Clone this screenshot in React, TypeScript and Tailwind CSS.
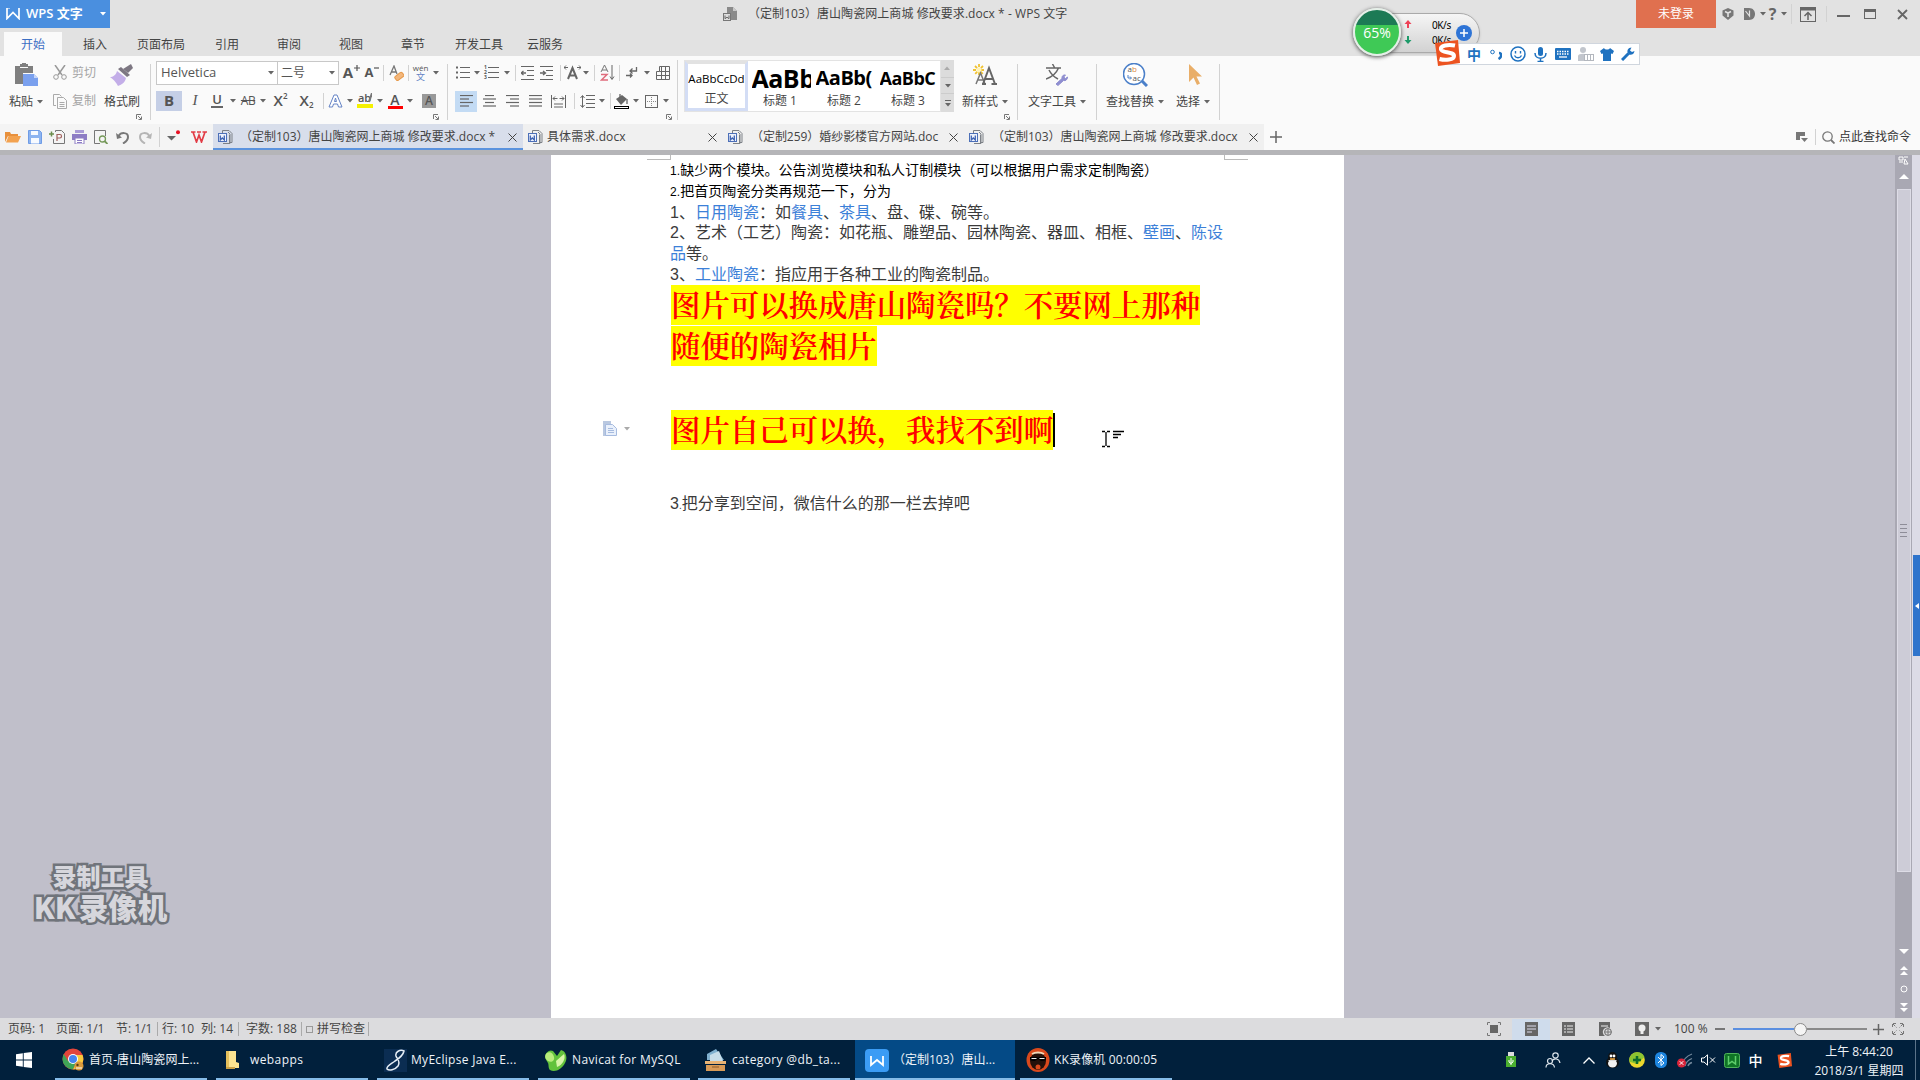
import React from "react";

type Kids = { className?: string; children?: React.ReactNode };

const UI = "font-['Open_Sans','Noto_Sans_CJK_SC',sans-serif]";

/** Fixed-width centred cell used by every toolbar row. */
function C({ className = "", children }: Kids) {
  return <div className={`flex shrink-0 items-center justify-center ${className}`}>{children}</div>;
}

function Svg({ w, h, children, className = "" }: { w: number; h: number; className?: string; children: React.ReactNode }) {
  return (
    <svg width={w} height={h} viewBox={`0 0 ${w} ${h}`} fill="none" className={`block shrink-0 ${className}`}>
      {children}
    </svg>
  );
}

function Caret({ color = "#666" }: { color?: string }) {
  return (
    <Svg w={6} h={4}>
      <path d="M0 0h6L3 3.5z" fill={color} />
    </Svg>
  );
}

function Sep({ className = "h-[16px]" }: { className?: string }) {
  return <div className={`w-px shrink-0 bg-[#d2d2d2] ${className}`} />;
}

function Lines({ rows, w = 13 }: { rows: [number, number][]; w?: number }) {
  return (
    <Svg w={w} h={12}>
      {rows.map(([a, b], i) => (
        <path key={i} d={`M${a} ${0.5 + i * 3.5}H${b}`} stroke="#666" strokeWidth="1.2" />
      ))}
    </Svg>
  );
}

function Launcher() {
  return (
    <Svg w={6} h={6}>
      <path d="M.5 5V.5H5M2 2l3 3M5.5 2.5v3h-3" stroke="#777" />
    </Svg>
  );
}

function DocIcon() {
  return (
    <Svg w={15} h={15}>
      <path d="M4.500 3V.5H11L14 3.500V12.500H12M6 13.500h6V4L10 2" stroke="#7d8187" />
      <path d="M11.500 5v8.500H5" stroke="#7d8187" />
      <rect x="0.500" y="3.500" width="8" height="8" fill="#eef2fb" stroke="#4d70b8" />
      <path d="M2.300 5.500v4.500l2-2 2 2V5.500" stroke="#3f64b3" strokeWidth="1.300" />
    </Svg>
  );
}

function Close() {
  return (
    <Svg w={9} h={9}>
      <path d="M.5.5l8 8M8.500.5l-8 8" stroke="#444" />
    </Svg>
  );
}

function TitleBar() {
  return (
    <div className="flex h-[28px] items-center bg-[#e2e2e2]">
      <div className="flex h-[28px] w-[110px] items-center bg-[#4a8fdf] pl-[6px]">
        <Svg w={14} h={12}>
          <path d="M1 0v10.500L7 4.500l6 6V0" stroke="#fff" strokeWidth="1.700" />
          <path d="M1 0h3" stroke="#fff" />
        </Svg>
        <span className="ml-[6px] w-[62px] whitespace-nowrap text-[13px] font-semibold text-white">WPS 文字</span>
        <C className="ml-[9px] w-[12px]"><Caret color="#fff" /></C>
      </div>
      <Svg w={15} h={15} className="ml-[613px]">
        <path d="M4 0h6l4 4v9H4z" fill="#8a8a8a" />
        <path d="M10 0v4h4z" fill="#c9c9c9" />
        <rect x="0.500" y="6.500" width="7" height="7" fill="#ddd" stroke="#777" />
        <path d="M2 8.500v3.200l2-1.500 2 1.500V8.500" stroke="#666" />
      </Svg>
      <span className="ml-[10px] w-[398px] whitespace-nowrap text-[12px] tracking-[0.06px] text-[#444]">（定制103）唐山陶瓷网上商城 修改要求.docx * - WPS 文字</span>
      <div className="ml-[490px] flex h-[28px] w-[80px] items-center justify-center bg-[#e0704f] text-[12px] text-white">未登录</div>
      <C className="w-[24px]">
        <Svg w={12} h={12}>
          <path d="M6 0l5.500 2.500v5L6 12 .5 7.500v-5z" fill="#777" />
          <path d="M3 3.500l3 1.500 3-1.500M6 5v4" stroke="#e2e2e2" strokeWidth="1.600" />
        </Svg>
      </C>
      <C className="w-[19px]">
        <Svg w={11} h={12}>
          <path d="M0 0h5c8 0 8 12 0 12H0z" fill="#777" />
          <path d="M1.500 3l4 5V2.500" stroke="#e2e2e2" strokeWidth="1.200" />
        </Svg>
      </C>
      <C className="w-[7px]"><Caret /></C>
      <C className="w-[13px] text-[16px] font-bold text-[#666]">?</C>
      <C className="w-[9px]"><Caret /></C>
      <C className="w-[6px]"><Sep className="h-[20px] bg-[#bbb]" /></C>
      <C className="w-[27px]">
        <Svg w={16} h={15}>
          <rect x="0.500" y="0.500" width="15" height="14" stroke="#666" />
          <path d="M0 2h16" stroke="#666" strokeWidth="3" />
          <path d="M8 13V6M4.500 9L8 5.500 11.500 9" stroke="#666" strokeWidth="1.500" />
        </Svg>
      </C>
      <C className="w-[10px]"><Sep className="h-[16px] bg-[#bbb]" /></C>
      <C className="w-[24px]"><div className="mt-[4px] h-[2px] w-[13px] bg-[#666]" /></C>
      <C className="ml-[3px] w-[24px]"><div className="h-[10px] w-[12px] border-[1.500px] border-t-[3px] border-[#666]" /></C>
      <C className="ml-[8px] w-[24px]">
        <Svg w={11} h={11}><path d="M1 1l9 9M10 1l-9 9" stroke="#666" strokeWidth="1.800" /></Svg>
      </C>
    </div>
  );
}

const tabs: [string, string][] = [
  ["插入", "w-[62px]"],
  ["页面布局", "w-[70px]"],
  ["引用", "w-[62px]"],
  ["审阅", "w-[62px]"],
  ["视图", "w-[62px]"],
  ["章节", "w-[62px]"],
  ["开发工具", "w-[70px]"],
  ["云服务", "w-[62px]"],
];

function RibbonTabs() {
  return (
    <div className="flex h-[28px] items-end bg-[#e2e2e2] pl-[4px] text-[12px] text-[#444]">
      <div className="flex h-[24px] w-[58px] items-center justify-center bg-[#fafafa] pt-[2px] text-[#3c6fc4]">开始</div>
      <div className="ml-[2px] flex h-[24px] items-center pt-[2px]">
        {tabs.map(([t, w]) => (
          <C key={t} className={w}>{t}</C>
        ))}
      </div>
    </div>
  );
}

function BigButton({ icon, label, className, caret = true }: { icon: React.ReactNode; label: string; className: string; caret?: boolean }) {
  return (
    <div className={`flex h-[56px] shrink-0 flex-col items-center ${className}`}>
      <div className="flex h-[30px] items-center justify-center">{icon}</div>
      <div className="flex h-[24px] items-center gap-[4px] whitespace-nowrap text-[12px] text-[#444]">
        {label}
        {caret && <Caret />}
      </div>
    </div>
  );
}

function Clipboard() {
  return (
    <div className="flex h-[68px] w-[150px] shrink-0 pt-[4px]">
      <BigButton
        className="w-[50px] pl-[2px]"
        label="粘贴"
        icon={
          <Svg w={26} h={24} className="ml-[1px]">
            <path d="M1 3h5V1h2V0h4v1h2v2h5v7H9v11H1z" fill="#7f7f7f" />
            <path d="M6 4.500h8" stroke="#fafafa" />
            <path d="M9 11h11l4 4v8H9z" fill="#7aa0ee" />
            <path d="M20 11v4h4z" fill="#c5d6fa" />
          </Svg>
        }
      />
      <div className="flex w-[52px] flex-col text-[12px] text-[#a5a5a5]">
        <div className="flex h-[25px] items-center gap-[5px] pl-[3px]">
          <Svg w={14} h={15}>
            <path d="M2 0l7 10M12 0L5 10" stroke="#999" strokeWidth="1.500" />
            <circle cx="3" cy="12" r="2.300" stroke="#999" />
            <circle cx="11" cy="12" r="2.300" stroke="#999" />
          </Svg>
          剪切
        </div>
        <div className="mt-[3px] flex h-[26px] items-center gap-[5px] pl-[3px]">
          <Svg w={14} h={15}>
            <path d="M3 11.500H.5V.5h6l2 2" stroke="#aaa" />
            <path d="M4.500 3.500h6l3 3v8h-9zM6.500 8.500h5M6.500 10.500h5M6.500 12.500h5" stroke="#aaa" />
          </Svg>
          复制
        </div>
      </div>
      <div className="flex w-[40px] flex-col items-center">
        <BigButton
          className="w-[40px]"
          caret={false}
          label="格式刷"
          icon={
            <Svg w={24} h={24}>
              <path d="M21 1l2 4-5 5-5-4z" fill="#7d7782" />
              <path d="M11 4l9 8-3 2-9-8z" fill="#7d7782" />
              <path d="M7 8l9 7c-1 5-5 7-8 8-2-4-5-7-8-9 3 0 6-2 7-6z" fill="#c3aee8" />
            </Svg>
          }
        />
        <div className="-mt-[2px] self-end"><Launcher /></div>
      </div>
    </div>
  );
}

function FontGroup() {
  return (
    <div className="flex h-[68px] w-[296px] shrink-0 flex-col pl-[5px] pt-[4px] text-[#555]">
      <div className="flex h-[25px] items-center">
        <div className="flex h-[24px] w-[122px] items-center justify-between border border-[#c8c8c8] bg-white pl-[4px] pr-[3px] text-[13px]">
          Helvetica <Caret />
        </div>
        <div className="-ml-px flex h-[24px] w-[62px] items-center justify-between border border-[#c8c8c8] bg-white pl-[3px] pr-[3px] text-[12px]">
          二号 <Caret />
        </div>
        <C className="w-[25px] text-[15px] font-bold">
          A<Svg w={6} h={6} className="-mt-[9px] ml-px"><path d="M3 0v6M0 3h6" stroke="#555" strokeWidth="1.200" /></Svg>
        </C>
        <C className="w-[16px] text-[13px] font-bold">
          A<Svg w={5} h={6} className="-mt-[9px] ml-px"><path d="M0 3h5" stroke="#555" strokeWidth="1.200" /></Svg>
        </C>
        <C className="w-[6px]"><Sep /></C>
        <C className="w-[20px]">
          <Svg w={15} h={16}>
            <path d="M1 10L5 1l3 8M2.500 7h5" stroke="#777" strokeWidth="1.300" />
            <rect x="5.500" y="9" width="9" height="5" rx="1.500" transform="rotate(-38 10 11)" fill="#f3b77c" stroke="#e69a4c" />
          </Svg>
        </C>
        <C className="w-[5px]"><Sep /></C>
        <C className="w-[19px] flex-col">
          <span className="h-[8px] text-[8px] leading-[8px]">wén</span>
          <span className="h-[9px] text-[9px] leading-[9px] text-[#6483c5]">文</span>
        </C>
        <C className="w-[12px]"><Caret /></C>
      </div>
      <div className="mt-[5px] flex h-[21px] items-center">
        <C className="h-[20px] w-[26px] bg-[#c5cfe6] text-[15px] font-bold text-[#555]">B</C>
        <C className="w-[26px] font-['Liberation_Serif'] text-[15px] italic">I</C>
        <C className="w-[18px]"><span className="border-b-2 border-[#666] px-px text-[13px] font-semibold leading-[13px]">U</span></C>
        <C className="w-[13px]"><Caret /></C>
        <C className="w-[18px] text-[12px] tracking-[-0.5px] line-through">AB</C>
        <C className="w-[11px]"><Caret /></C>
        <C className="w-[25px] text-[15px] font-semibold">X<span className="-mt-[9px] text-[8px]">2</span></C>
        <C className="w-[27px] text-[15px] font-semibold">X<span className="mt-[8px] text-[8px]">2</span></C>
        <C className="w-[6px]"><Sep /></C>
        <C className="w-[18px]">
          <Svg w={15} h={14}>
            <path d="M1 13L6 1h3l5 12h-3.500l-1-3h-4l-1 3zM6.500 7.500h2L7.500 4z" fill="#fff" stroke="#6483c5" />
          </Svg>
        </C>
        <C className="w-[12px]"><Caret /></C>
        <C className="w-[18px]">
          <div className="flex h-[15px] w-[16px] items-start justify-center border-b-[4px] border-[#f5f100] text-[11px] font-semibold leading-[9px]">
            ab<Svg w={4} h={10} className="-ml-[3px]"><path d="M4 0L1 9" stroke="#777" strokeWidth="2" /></Svg>
          </div>
        </C>
        <C className="w-[12px]"><Caret /></C>
        <C className="w-[18px]"><span className="w-[15px] border-b-[3px] border-[#f00] text-center text-[14px] font-semibold leading-[13px]">A</span></C>
        <C className="w-[12px]"><Caret /></C>
        <C className="w-[26px]"><span className="flex h-[14px] w-[14px] items-center justify-center bg-[#999] text-[12px] font-semibold">A</span></C>
      </div>
      <div className="flex justify-end pr-[8px] pt-[3px]"><Launcher /></div>
    </div>
  );
}

function Indent({ flip = false }: { flip?: boolean }) {
  return (
    <Svg w={13} h={14}>
      <path d="M0 .5h13M6 4.500h7M6 9.500h7M0 13.500h13" stroke="#666" />
      <path d={flip ? "M0 7h5M3 5l2.500 2L3 9" : "M0 7h5M2.500 5L0 7l2.500 2"} stroke="#666" strokeWidth="1.300" />
    </Svg>
  );
}

function ParagraphGroup() {
  return (
    <div className="flex h-[68px] w-[229px] shrink-0 flex-col pl-[6px] pt-[4px] text-[#555]">
      <div className="flex h-[25px] items-center">
        <C className="w-[17px]">
          <Svg w={14} h={13}>
            <path d="M4 1.500h10M4 6.500h10M4 11.500h10" stroke="#666" />
            <path d="M0 1.500h2M0 6.500h2M0 11.500h2" stroke="#666" strokeWidth="2" />
          </Svg>
        </C>
        <C className="w-[11px]"><Caret /></C>
        <C className="w-[19px]">
          <div className="flex flex-col text-[5px] font-bold leading-[5px]"><span>1</span><span>2</span><span>3</span></div>
          <Svg w={11} h={13} className="ml-px"><path d="M0 1.500h11M0 6.500h11M0 11.500h11" stroke="#666" /></Svg>
        </C>
        <C className="w-[11px]"><Caret /></C>
        <C className="w-[6px]"><Sep /></C>
        <C className="w-[18px]"><Indent /></C>
        <C className="w-[21px]"><Indent flip /></C>
        <C className="w-[6px]"><Sep /></C>
        <C className="w-[18px]">
          <Svg w={17} h={15}>
            <path d="M4 14L8.500 3 13 14M5.500 10.500h6" stroke="#666" strokeWidth="2" />
            <path d="M0 2.500h4M2 .5l-2 2 2 2M17 2.500h-4M15 .5l2 2-2 2" stroke="#666" />
          </Svg>
        </C>
        <C className="w-[10px]"><Caret /></C>
        <C className="w-[7px]"><Sep /></C>
        <C className="w-[18px]">
          <Svg w={15} h={16}>
            <path d="M1 7L4.500 0 8 7M2 5h5" stroke="#777" />
            <path d="M1 9.500h6L1.500 15H8" stroke="#df6c7c" strokeWidth="1.500" />
            <path d="M12 0v14M10 11.500l2 3 2-3" stroke="#666" />
          </Svg>
        </C>
        <C className="w-[6px]"><Sep /></C>
        <C className="w-[20px]">
          <Svg w={12} h={12}>
            <path d="M10.500 0v4H4M6.500 1.500L4 4l2.500 2.500M0 8.500h6M4 6.500l2 2-2 2" stroke="#666" strokeWidth="1.300" />
          </Svg>
        </C>
        <C className="w-[9px]"><Caret /></C>
        <C className="w-[23px]">
          <Svg w={14} h={14}>
            <path d="M3.500.5h10v13H.5v-8h3zM3.500 5.500h10M.5 9.500h13M5.500.5v13M9.500.5v13" stroke="#666" />
          </Svg>
        </C>
      </div>
      <div className="mt-[5px] flex h-[22px] items-center pl-px">
        <C className="h-[21px] w-[22px] bg-[#c3dbf4]"><Lines rows={[[0, 13], [0, 9], [0, 13], [0, 9]]} /></C>
        <C className="w-[24px]"><Lines rows={[[2, 11], [0, 13], [2, 11], [0, 13]]} /></C>
        <C className="w-[23px]"><Lines rows={[[0, 13], [4, 13], [0, 13], [4, 13]]} /></C>
        <C className="w-[23px]"><Lines rows={[[0, 13], [0, 13], [0, 13], [0, 13]]} /></C>
        <C className="w-[22px]">
          <Svg w={15} h={13}>
            <path d="M.5 0v13M14.500 0v13M3 9h9M3 12h9M2 3.500h4.500M8.500 3.500H13M4 1.500l-2 2 2 2M11 1.500l2 2-2 2" stroke="#666" />
          </Svg>
        </C>
        <C className="w-[10px]"><Sep /></C>
        <C className="w-[17px]">
          <Svg w={15} h={13}>
            <path d="M6 .5h9M6 4.500h9M6 8.500h9M6 12.500h9M2.500 1v11M.5 3l2-2.500 2 2.500M.5 10l2 2.500 2-2.500" stroke="#666" />
          </Svg>
        </C>
        <C className="w-[11px]"><Caret /></C>
        <C className="w-[6px]"><Sep /></C>
        <C className="w-[17px]">
          <Svg w={15} h={15}>
            <path d="M2 5l6-4 5 4-6 6z" fill="#666" />
            <path d="M6 0v4M13 5v5" stroke="#666" strokeWidth="1.300" />
            <rect x="0.500" y="12.500" width="14" height="2" fill="#fff" stroke="#000" />
          </Svg>
        </C>
        <C className="w-[12px]"><Caret /></C>
        <C className="w-[18px]">
          <Svg w={13} h={13}>
            <rect x="0.500" y="0.500" width="12" height="12" stroke="#666" />
            <path d="M6.500 2v9M2 6.500h9" stroke="#888" strokeDasharray="1 1" />
          </Svg>
        </C>
        <C className="w-[12px]"><Caret /></C>
      </div>
      <div className="flex justify-end pr-[5px] pt-[2px]"><Launcher /></div>
    </div>
  );
}

const styleCards: [string, string, string][] = [
  ["AaBb", "text-[25px] font-bold", "标题 1"],
  ["AaBb(", "text-[20px] font-bold", "标题 2"],
  ["AaBbC", "text-[18px] font-bold", "标题 3"],
];

function StylesGroup() {
  return (
    <div className="flex h-[68px] w-[339px] shrink-0 pl-[6px] pt-[4px]">
      <div className="flex h-[52px] w-[257px] border border-[#e3e3e3] bg-white text-[12px] text-[#444]">
        <div className="flex h-[50px] w-[63px] shrink-0 flex-col items-center border-[3px] border-[#d3ddf5] border-t-[#e2e2e2]">
          <span className="mt-[3px] flex h-[25px] items-center whitespace-nowrap text-[11.500px] text-black">AaBbCcDd</span>
          <span className="-mt-px leading-[18px]">正文</span>
        </div>
        {styleCards.map(([s, c, l]) => (
          <div key={l} className="flex w-[64px] shrink-0 flex-col items-center">
            <span className={`ml-[2px] mt-[3px] flex h-[28px] w-[59px] items-center overflow-hidden whitespace-nowrap leading-none tracking-[-0.5px] text-black ${c}`}>{s}</span>
            <span className="leading-[18px]">{l}</span>
          </div>
        ))}
      </div>
      <div className="flex h-[52px] w-[13px] flex-col bg-[#dcdcdc]">
        <C className="h-[17px] rotate-180"><Caret color="#aaa" /></C>
        <C className="h-[17px] border-y border-[#ccc]"><Caret /></C>
        <C className="h-[18px] flex-col gap-[2px]"><div className="h-px w-[6px] bg-[#666]" /><Caret /></C>
      </div>
      <div className="ml-[5px] flex w-[52px] flex-col">
        <BigButton
          className="w-[52px]"
          label="新样式"
          icon={
            <Svg w={24} h={22}>
              <path d="M6 0v12M0 6h12M2 2l8 8M10 2l-8 8" stroke="#f0c232" strokeWidth="1.800" strokeDasharray="3 1" />
              <circle cx="6" cy="6" r="2.500" fill="#fff3b8" />
              <path d="M3 20L7.500 9 12 20M5 16h6" stroke="#777" strokeWidth="1.500" />
              <path d="M10 20L16 4l6 16M12.500 15h7M9 20h4M18.500 20H24" stroke="#666" strokeWidth="2" />
            </Svg>
          }
        />
        <div className="-mt-[2px] mr-px self-end"><Launcher /></div>
      </div>
    </div>
  );
}

function Ribbon() {
  return (
    <div className="flex h-[68px] items-start bg-[#fafafa]">
      <Clipboard />
      <Sep className="mt-[8px] h-[56px]" />
      <FontGroup />
      <Sep className="mt-[8px] h-[56px]" />
      <ParagraphGroup />
      <Sep className="mt-[4px] h-[60px]" />
      <StylesGroup />
      <Sep className="mt-[8px] h-[56px]" />
      <div className="w-[78px] shrink-0 pt-[4px]">
        <BigButton
          className="w-[78px]"
          label="文字工具"
          icon={
            <Svg w={22} h={22}>
              <path d="M0 4h15M6.500 0l2 3.500M12.500 4C10 10 6 13 0 15M3 6c2 4 5 7 9 9" stroke="#666" strokeWidth="1.500" />
              <path d="M10 20l6-5.500c-.5-2.500 1.500-4 3.500-3.500l-1.800 2 1.800 1.500 2-1.500c.2 2.500-2 4.200-4 3.500l-5.500 5z" fill="#8f8ed0" stroke="#8f8ed0" />
            </Svg>
          }
        />
      </div>
      <Sep className="mt-[8px] h-[56px]" />
      <div className="flex h-[68px] w-[122px] shrink-0 pt-[4px]">
        <BigButton
          className="w-[76px]"
          label="查找替换"
          icon={
            <div className="relative h-[24px] w-[25px]">
              <Svg w={25} h={24}>
                <circle cx="11" cy="11" r="10.500" fill="#fff" stroke="#4a7fc9" strokeWidth="1.500" />
                <path d="M19 18l5 5" stroke="#4a7fc9" strokeWidth="3" />
                <path d="M5 12v3h3M7 13.500L8.500 15 7 16.500" stroke="#4a7fc9" />
              </Svg>
              <span className="absolute left-[5px] top-[2px] text-[8px] leading-[8px] text-[#555]">a<span className="text-[#e08a3c]">b</span></span>
              <span className="absolute left-[10px] top-[11px] text-[8px] leading-[8px] text-[#555]">ac</span>
            </div>
          }
        />
        <BigButton
          className="w-[40px]"
          label="选择"
          icon={
            <Svg w={14} h={22} className="ml-[3px]">
              <path d="M1 0v18l4.500-4.500L9 21l3-1.500-3.500-7H14z" fill="#e9ae68" />
            </Svg>
          }
        />
      </div>
      <Sep className="mt-[8px] h-[56px]" />
    </div>
  );
}

function DocTab({ title, className, text, active = false }: { title: string; className: string; text: string; active?: boolean }) {
  return (
    <div className={`flex h-[26px] shrink-0 items-center pl-[5px] pr-[6px] ${active ? "border-b-2 border-[#5b93de] bg-[#d8deeb] pt-[2px]" : "bg-[#f0f0f0]"} ${className}`}>
      <DocIcon />
      <span className={`flex-1 whitespace-nowrap text-[12px] text-[#444] ${text}`}>{title}</span>
      <Close />
    </div>
  );
}

function DocTabs() {
  return (
    <div className="flex h-[26px] items-center bg-[#fafafa]">
      <div className="flex h-[26px] w-[213px] shrink-0 items-center bg-[#f4f4f4]">
        <C className="ml-px w-[23px]">
          <Svg w={16} h={12}>
            <path d="M0 11V1h5l1 2h7v2H3z" fill="#e8903c" />
            <path d="M3.500 5H16l-3 6.500H1z" fill="#f3a24f" />
          </Svg>
        </C>
        <C className="w-[22px]">
          <Svg w={14} h={14}>
            <path d="M.5.5h11l2 2v11H.5z" fill="#8db4f0" stroke="#6f9ce6" />
            <path d="M3 1h7v4H3zM3 8h8v5.500H3z" fill="#f7faff" />
          </Svg>
        </C>
        <C className="w-[22px]">
          <Svg w={16} h={14}>
            <path d="M0 4h5M2.500 1.500v5" stroke="#6b8c4c" strokeWidth="1.500" />
            <path d="M6.500 2V.5h6l3 3v10h-11V9" stroke="#777" />
            <path d="M8 11V4.500h3c2 0 2 3.500 0 3.500H8" stroke="#a0605c" strokeWidth="1.200" />
          </Svg>
        </C>
        <C className="w-[22px]">
          <Svg w={15} h={14}>
            <path d="M3 0h9v3H3z" fill="#a99bd6" />
            <path d="M0 4h15v6H0z" fill="#8d7cc4" />
            <path d="M3 8h9v6H3z" fill="#fff" stroke="#8d7cc4" />
            <path d="M5 10.500h5M5 12.500h5" stroke="#8d7cc4" />
          </Svg>
        </C>
        <C className="w-[21px]">
          <Svg w={14} h={14}>
            <path d="M6 13.500H.5V.5h11V6" stroke="#777" />
            <circle cx="8.500" cy="9" r="3" stroke="#76995a" strokeWidth="1.300" />
            <path d="M10.500 11l3 3" stroke="#76995a" strokeWidth="1.800" />
          </Svg>
        </C>
        <C className="w-[23px]">
          <Svg w={13} h={13}>
            <path d="M2.500 5C5 1 12 1 12 6c0 3-2.500 5-5 6.500" stroke="#777" strokeWidth="2" />
            <path d="M0 2l1 6 5-1.500z" fill="#777" />
          </Svg>
        </C>
        <C className="w-[23px]">
          <Svg w={13} h={13}>
            <path d="M10.500 5C8 1 1 1 1 6c0 3 2.500 5 5 6.500" stroke="#b5b5b5" strokeWidth="2" />
            <path d="M13 2l-1 6-5-1.500z" fill="#b5b5b5" />
          </Svg>
        </C>
        <C className="w-[4px]"><Sep className="h-[20px]" /></C>
        <C className="ml-[1px] w-[20px]">
          <Svg w={14} h={14} className="ml-[4px]">
            <path d="M0 6h9L4.500 10.500z" fill="#666" />
            <circle cx="11" cy="2.200" r="2" fill="#e81123" />
          </Svg>
        </C>
        <C className="ml-[6px] w-[22px]">
          <Svg w={16} h={12}>
            <path d="M0 1h4.500M2 1l3.500 10L8 4l2.500 7L14 1M6 1h4M11.500 1H16" stroke="#e23c46" strokeWidth="1.700" />
          </Svg>
        </C>
      </div>
      <DocTab active className="w-[310px]" text="ml-[7px]" title="（定制103）唐山陶瓷网上商城 修改要求.docx *" />
      <DocTab className="w-[200px]" text="ml-[4px] tracking-[0.1px]" title="具体需求.docx" />
      <DocTab className="w-[241px]" text="ml-[8px] tracking-[-0.05px]" title="（定制259）婚纱影楼官方网站.doc" />
      <DocTab className="w-[300px]" text="ml-[8px]" title="（定制103）唐山陶瓷网上商城 修改要求.docx" />
      <C className="w-[24px]"><Svg w={12} h={12}><path d="M6 0v12M0 6h12" stroke="#666" strokeWidth="1.500" /></Svg></C>
      <div className="ml-auto flex items-center pr-[9px] text-[12px] text-[#333]">
        <Svg w={12} h={11}>
          <path d="M0 0h9v4H4v4H0z" fill="#777" />
          <path d="M5 6h7l-3.500 4z" fill="#777" />
        </Svg>
        <Sep className="ml-[7px] mr-[6px] h-[16px]" />
        <Svg w={13} h={13}>
          <circle cx="5.500" cy="5.500" r="4.700" stroke="#777" strokeWidth="1.300" />
          <path d="M9 9l3.500 3.500" stroke="#777" strokeWidth="1.800" />
        </Svg>
        <span className="ml-[4px]">点此查找命令</span>
      </div>
    </div>
  );
}

function Link({ children }: Kids) {
  return <span className="text-[#3c80d8]">{children}</span>;
}

function Page() {
  return (
    <div className="ml-[551px] h-full w-[793px] shrink-0 bg-white text-black font-['Liberation_Sans','Noto_Sans_CJK_SC',sans-serif]">
      <div className="flex h-[5px] justify-between pl-[96px] pr-[96px]">
        <div className="h-[5px] w-[24px] border-b border-r border-[#bbb]" />
        <div className="h-[5px] w-[24px] border-b border-l border-[#bbb]" />
      </div>
      <div className="pl-[119px]">
        <p className="h-[20.8px] whitespace-nowrap text-[14px] leading-[20.8px] tracking-[0.06px]"><span className="text-[12px]">1.</span>缺少两个模块。公告浏览模块和私人订制模块（可以根据用户需求定制陶瓷）</p>
        <p className="h-[20.8px] whitespace-nowrap text-[14px] leading-[20.8px] tracking-[0.06px]"><span className="text-[12px]">2.</span>把首页陶瓷分类再规范一下，分为</p>
        <div className="whitespace-nowrap text-[16px] leading-[22.8px] text-[#3b3b3b]">
          <p className="h-[20.8px]">1、<Link>日用陶瓷</Link>：如<Link>餐具</Link>、<Link>茶具</Link>、盘、碟、碗等。</p>
          <p className="h-[20.8px]">2、艺术（工艺）陶瓷：如花瓶、雕塑品、园林陶瓷、器皿、相框、<Link>壁画</Link>、<Link>陈设</Link></p>
          <p className="h-[20.8px]"><Link>品</Link>等。</p>
          <p className="h-[20.8px]">3、<Link>工业陶瓷</Link>：指应用于各种工业的陶瓷制品。</p>
        </div>
        <div className="whitespace-nowrap pl-px font-['Noto_Serif_CJK_SC','Noto_Sans_CJK_SC',serif] text-[29.4px] font-semibold leading-[36px] text-[#f00]">
          <p className="mb-[1.6px] h-[40px] w-fit bg-[#ff0]">图片可以换成唐山陶瓷吗？不要网上那种</p>
          <p className="mb-[43.2px] h-[40px] w-fit bg-[#ff0]">随便的陶瓷相片</p>
          <div className="flex">
            <p className="h-[40px] w-fit bg-[#ff0]">图片自己可以换，我找不到啊</p>
            <div className="mt-[3px] h-[34px] w-[2px] bg-black" />
          </div>
        </div>
        <p className="mt-[44px] whitespace-nowrap text-[16px] leading-[20.8px] text-[#3b3b3b]">3<span className="text-[10px]">.</span>把分享到空间，微信什么的那一栏去掉吧</p>
      </div>
    </div>
  );
}

function ScrollBar() {
  return (
    <div className="ml-auto flex h-full">
      <div className="flex w-[17px] flex-col items-center bg-[#a9a8b3]">
        <C className="h-[10px]">
          <Svg w={11} h={9}>
            <path d="M1 1h4v3H1zM6 1h4M1 6h4M7 3l3 5H6z" stroke="#fff" />
          </Svg>
        </C>
        <C className="h-[24px] rotate-180"><Svg w={10} h={5}><path d="M0 5h10L5 0z" fill="#fff" className="rotate-180 origin-center" /></Svg></C>
        <div className="flex h-[683px] w-[14px] flex-col items-center justify-center gap-[3px] border border-[#dddce6] bg-[#cdccd7]">
          {[0, 1, 2, 3].map((i) => <div key={i} className="h-px w-[7px] bg-[#8e8d98]" />)}
        </div>
        <C className="mt-[69px] h-[20px]"><Svg w={10} h={5}><path d="M0 0h10L5 5z" fill="#fff" /></Svg></C>
        <C className="h-[18px]"><Svg w={8} h={9}><path d="M0 4l4-4 4 4zM0 9l4-4 4 4z" fill="#fff" /></Svg></C>
        <C className="h-[20px]"><Svg w={8} h={8}><circle cx="4" cy="4" r="3" stroke="#fff" /></Svg></C>
        <C className="h-[16px]"><Svg w={8} h={9}><path d="M0 0l4 4 4-4zM0 5l4 4 4-4z" fill="#fff" /></Svg></C>
      </div>
      <div className="w-[8px] bg-[#dcdbe6] pl-px pt-[400px]">
        <C className="h-[101px] w-[7px] bg-[#2f74cc]"><Svg w={4} h={6}><path d="M4 0v6L0 3z" fill="#fff" /></Svg></C>
      </div>
    </div>
  );
}

function Workspace() {
  return (
    <div className="relative flex h-[868px] flex-col bg-[#c0bfca]">
      <div className="h-[5px] shrink-0 bg-[#b5b5b8]" />
      <div className="flex h-[863px]">
        <Page />
        <ScrollBar />
      </div>
      {/* screen recorder watermark */}
      <div className="absolute left-[30px] top-[710px] flex w-[141px] flex-col items-center whitespace-nowrap font-['Noto_Sans_CJK_SC',sans-serif] font-black text-[#d6d6dc] [-webkit-text-stroke:5px_#70747b] [paint-order:stroke_fill]">
        <span className="text-[24px] leading-[32px]">录制工具</span>
        <span className="-mt-px flex items-center text-[29.500px] leading-[30px]">KK<span className="ml-[3px]">录像机</span></span>
      </div>
      {/* paste-options marker beside the paragraph */}
      <div className="absolute left-[603px] top-[271px] flex items-center gap-[7px]">
        <Svg w={14} h={16}>
          <path d="M0 0h8v15H0z" fill="#b9c8e0" />
          <path d="M2.500 3.500h7l4 4v7h-11z" fill="#e9f0fb" stroke="#a6bbdf" />
          <path d="M5 7.500h5M5 9.500h6M5 11.500h6" stroke="#a6bbdf" />
        </Svg>
        <Caret color="#aaa" />
      </div>
      {/* text cursor */}
      <div className="absolute left-[1101px] top-[280px]">
        <Svg w={24} h={18}>
          <path d="M1 1.500h3M6 1.500h3M5 2v14M1 16.500h3M6 16.500h3" stroke="#000" strokeWidth="1.300" />
          <path d="M12 1.500h11M12 4.500h8M12 7.500h5" stroke="#000" strokeWidth="1.500" />
        </Svg>
      </div>
    </div>
  );
}

function VSep() {
  return <div className="h-[14px] w-px shrink-0 bg-[#aaa]" />;
}

function StatusBar() {
  return (
    <div className="flex h-[22px] items-center bg-[#dcdcde] pl-[8px] text-[12px] text-[#444]">
      <span className="w-[48px] whitespace-nowrap">页码: 1</span>
      <span className="w-[60px] whitespace-nowrap">页面: 1/1</span>
      <span className="w-[41px] whitespace-nowrap">节: 1/1</span>
      <VSep />
      <span className="ml-[4px] w-[39px] whitespace-nowrap">行: 10</span>
      <span className="w-[37px] whitespace-nowrap">列: 14</span>
      <VSep />
      <span className="ml-[7px] w-[55px] whitespace-nowrap">字数: 188</span>
      <VSep />
      <div className="ml-[4px] mr-[4px] h-[7px] w-[7px] border border-[#999]" />
      <span className="w-[51px] whitespace-nowrap">拼写检查</span>
      <VSep />
      <div className="ml-auto flex h-[22px] items-center">
        <Svg w={14} h={14}>
          <path d="M3 3h8v8H3z" fill="#666" />
          <path d="M.5 3V.5H3M11 .5h2.500V3M13.500 11v2.500H11M3 13.500H.5V11" stroke="#777" />
        </Svg>
        <C className="ml-[11px] h-[21px] w-[38px] bg-[#cfdcec]">
          <Svg w={13} h={14}><path d="M0 0h13v14H0z" fill="#666" /><path d="M2 4h9M2 7h9M2 10h5" stroke="#dde" /></Svg>
        </C>
        <C className="w-[37px]">
          <Svg w={13} h={14}><path d="M0 0h13v14H0z" fill="#666" /><path d="M2 4h2M2 7h2M2 10h2M5 4h6M5 7h6M5 10h6" stroke="#eee" /></Svg>
        </C>
        <C className="w-[37px]">
          <Svg w={13} h={14}>
            <path d="M0 0h11v6a4 4 0 0 0-5 8H0z" fill="#666" /><path d="M2 4h7" stroke="#eee" />
            <circle cx="9" cy="10" r="3.400" stroke="#666" /><path d="M9 7v6M6 10h6" stroke="#777" />
          </Svg>
        </C>
        <C className="w-[30px] pl-[5px]">
          <Svg w={14} h={14}><path d="M0 0h14v14H0z" fill="#666" /><circle cx="7" cy="6" r="3.500" fill="#eee" /><path d="M5.500 9h3v3h-3z" fill="#eee" /></Svg>
        </C>
        <C className="w-[8px]"><Caret /></C>
        <span className="ml-[12px] w-[41px] whitespace-nowrap">100 %</span>
        <div className="h-[2px] w-[10px] bg-[#777]" />
        <div className="ml-[8px] h-[2px] w-[61px] bg-[#5b8fe0]" />
        <div className="h-[13px] w-[13px] rounded-full border border-[#888] bg-[#f5f5f5]" />
        <div className="h-[2px] w-[60px] bg-[#8a8a8a]" />
        <Svg w={11} h={11} className="ml-[6px]"><path d="M5.500 0v11M0 5.500h11" stroke="#666" strokeWidth="1.500" /></Svg>
        <Svg w={12} h={12} className="ml-[8px] mr-[16px]">
          <path d="M.5 4V.5H4M8 .5h3.500V4M11.500 8v3.500H8M4 11.500H.5V8M1 1l3.500 3.500M11 1L7.500 4.500M11 11L7.500 7.500M1 11l3.500-3.500" stroke="#777" strokeDasharray="3 1" />
        </Svg>
      </div>
    </div>
  );
}

function SogouS({ w }: { w: number }) {
  return (
    <svg width={w} height={w} viewBox="0 0 26 26" fill="none" className="block shrink-0">
      <path d="M1 3L24 0l2 23-22 3z" fill="#ec5320" />
      <path d="M21 5.500C14 4 6 5.500 7 9.500c1 3.500 13 2 13 6.500 0 4-9 4.500-14.500 3" stroke="#fff" strokeWidth="4" />
    </svg>
  );
}

function Task({ icon, label, className, text, active = false }: { icon: React.ReactNode; label: string; className: string; text: string; active?: boolean }) {
  return (
    <div className={`flex h-[40px] shrink-0 items-center border-b-2 border-[#86bce8] pt-[2px] ${active ? "bg-[#044a86]" : ""} ${className}`}>
      {icon}
      <span className={`whitespace-nowrap ${text}`}>{label}</span>
    </div>
  );
}

function Taskbar() {
  return (
    <div className="flex h-[40px] items-center bg-[#01203c] text-[12px] text-[#eef3f8]">
      <C className="w-[48px]">
        <Svg w={16} h={16}>
          <path d="M0 2.300l6.800-1v6.200H0zM7.700 1.100L16 0v7.500H7.700zM0 8.500h6.800v6.200l-6.800-1zM7.700 8.500H16V16l-8.300-1.100z" fill="#fff" />
        </Svg>
      </C>
      <Task className="ml-[7px] w-[152px] pl-[7px]" text="ml-[5px] tracking-[0.08px]" label="首页-唐山陶瓷网上..." icon={
        <Svg w={22} h={24}>
          <circle cx="11" cy="11" r="10.500" fill="#e2453a" />
          <path d="M1.800 6A10.500 10.500 0 0 0 11 21.500L14 14 6 13z" fill="#3fa457" />
          <path d="M11 21.500A10.500 10.500 0 0 0 20.500 7H11l4 7z" fill="#f8cb3c" />
          <circle cx="11" cy="11" r="5" fill="#fff" /><circle cx="11" cy="11" r="4" fill="#4684ee" />
          <circle cx="17" cy="18" r="4.500" fill="#d99a3c" /><circle cx="15.500" cy="17" r="1.200" fill="#5a3a14" /><path d="M14 20h6" stroke="#fff" />
        </Svg>} />
      <Task className="ml-[9px] w-[152px] pl-[9px]" text="ml-[10px] tracking-[0.4px]" label="webapps" icon={
        <Svg w={15} h={20}>
          <path d="M1 1h9v16H1z" fill="#e5c05c" /><path d="M4 1h7v11l3 1v5H4z" fill="#fbe391" /><path d="M1 17h9v2H1z" fill="#caa045" />
        </Svg>} />
      <Task className="ml-[9px] w-[152px] pl-[7px]" text="ml-[4px] tracking-[0.3px]" label="MyEclipse Java E..." icon={
        <Svg w={23} h={23}>
          <path d="M0 0h23v23H0z" fill="#0b2d52" />
          <path d="M20 2c-4-2-9 1-8 5 1 3 5 5 2 10-3 4-9 5-11 3-1-3 4-5 8-8 4-2.500 8-5 9-10z" stroke="#e6eef6" strokeWidth="1.500" />
        </Svg>} />
      <Task className="ml-[9px] w-[152px] pl-[6px]" text="ml-[5px] tracking-[0.35px]" label="Navicat for MySQL" icon={
        <Svg w={23} h={23}>
          <path d="M1 9C1 3 6 0 9 2l4 5 4-6c5 1 7 8 4 13-3 6-10 10-15 7-2-2-1-5-2-7z" fill="#62c23c" />
          <path d="M3 4c3-2 6 0 7 4s-3 6-6 4-4-6-1-8z" fill="#b8ec7c" /><path d="M12 12l8-7c2 4-1 11-7 13z" fill="#d7f5a9" />
        </Svg>} />
      <Task className="ml-[8px] w-[152px] pl-[7px]" text="ml-[6px] tracking-[0.35px]" label="category @db_ta..." icon={
        <Svg w={21} h={22}>
          <path d="M2 5l9-5 8 11H2z" fill="#7fb0cf" /><path d="M5 6l9-4 4 10H5z" fill="#c7dde9" />
          <path d="M0 12h21v3H0z" fill="#e8b374" /><path d="M1 16h19v6H1z" fill="#d89a56" /><path d="M7 18h7" stroke="#8d5a28" />
        </Svg>} />
      <Task active className="ml-[5px] w-[160px] pl-[10px]" text="ml-[4px]" label="（定制103）唐山..." icon={
        <Svg w={24} h={23}>
          <rect width="24" height="23" rx="4" fill="#3b9cf5" />
          <path d="M6 7v9l6-5 6 5V7" stroke="#fff" strokeWidth="1.800" />
        </Svg>} />
      <Task className="ml-[5px] w-[152px] pl-[6px]" text="ml-[4px] tracking-[0.15px]" label="KK录像机 00:00:05" icon={
        <Svg w={24} h={24}>
          <ellipse cx="12" cy="12" rx="11.500" ry="12" fill="#d9491c" /><ellipse cx="12" cy="13" rx="8" ry="9" fill="#23100a" />
          <path d="M4 9h7l1 1 1-1h7v3c-3 2-6 1-8-1-2 2-5 3-8 1z" fill="#000" /><path d="M6 6c3-2 9-2 12 0" stroke="#f0d8b8" strokeWidth="2" />
          <path d="M5.500 10.500h5M13.500 10.500h5" stroke="#eee" /><circle cx="12" cy="19" r="2.500" fill="#d9491c" />
        </Svg>} />
      <div className="ml-auto flex h-[40px] items-center">
        <C className="w-[20px]">
          <Svg w={10} h={16}>
            <path d="M2 0h6v4H2z" fill="#ddd" /><path d="M0 4h10v11H0z" fill="#4aae2f" /><path d="M5 6v7M3 8v2l2 1.500L7 10V8" stroke="#fff" />
          </Svg>
        </C>
        <C className="ml-[12px] w-[40px]">
          <Svg w={16} h={16}>
            <circle cx="10.500" cy="3.500" r="2.700" stroke="#dfe7ee" strokeWidth="1.200" /><path d="M7 9c2-3 7-3 8 2" stroke="#dfe7ee" strokeWidth="1.200" />
            <circle cx="5" cy="9" r="2.500" stroke="#dfe7ee" strokeWidth="1.200" /><path d="M1 15.500c0-5 8-5 8.500 0" stroke="#dfe7ee" strokeWidth="1.200" />
          </Svg>
        </C>
        <C className="ml-[4px] w-[24px]"><Svg w={12} h={7}><path d="M.5 6.500L6 1l5.500 5.500" stroke="#fff" strokeWidth="1.300" /></Svg></C>
        <C className="w-[23px]">
          <Svg w={15} h={16}>
            <ellipse cx="7.500" cy="5" rx="4.500" ry="5" fill="#111" /><ellipse cx="7.500" cy="10.500" rx="6.500" ry="5.500" fill="#111" />
            <ellipse cx="7.500" cy="11.500" rx="4.500" ry="4" fill="#f2f2f2" /><circle cx="6" cy="4" r="1.400" fill="#fff" /><circle cx="9" cy="4" r="1.400" fill="#fff" />
            <path d="M5 7h5" stroke="#f0a63a" strokeWidth="1.500" /><path d="M3.500 8.500h8" stroke="#ddd" />
          </Svg>
        </C>
        <C className="w-[25px]">
          <Svg w={16} h={16}>
            <circle cx="8" cy="8" r="7.800" fill="#ecd82c" /><path d="M8 .2a7.800 7.800 0 0 0-7.500 9.500L8 12l7.500-7A7.800 7.800 0 0 0 8 .2z" fill="#8cc531" />
            <path d="M8 4v8M4 8h8" stroke="#0e6b2b" strokeWidth="2.500" />
          </Svg>
        </C>
        <C className="w-[23px]">
          <Svg w={12} h={16}>
            <rect width="12" height="16" rx="5.500" fill="#1e86e0" /><path d="M3 5l6 6-3 2.500V2.500L9 5l-6 6" stroke="#fff" />
          </Svg>
        </C>
        <C className="w-[25px]">
          <Svg w={16} h={15}>
            <path d="M5 13C6 7 9 3 15 1M8 13c1-4 3-6 7-7.500M11 13c.5-2 2-3 4-3.500" stroke="#72889b" strokeWidth="1.300" />
            <circle cx="4.500" cy="10" r="4.500" fill="#d8243a" /><path d="M2.700 8.200l3.600 3.600M6.300 8.200l-3.600 3.600" stroke="#fff" />
          </Svg>
        </C>
        <C className="w-[22px]">
          <Svg w={15} h={12}>
            <path d="M.5 4h2.500L6.500.8v10.400L3 8H.5z" stroke="#fff" /><path d="M9 3.500l5 5M14 3.500l-5 5" stroke="#fff" />
          </Svg>
        </C>
        <C className="w-[26px]">
          <Svg w={16} h={15}>
            <rect x="0.500" y="0.500" width="15" height="14" rx="2" fill="#0f7426" stroke="#4fb35a" />
            <path d="M4.500 3v8l3.500-2.500 3.500 2.500V3" stroke="#5fce6b" strokeWidth="1.500" />
          </Svg>
        </C>
        <C className="w-[21px] text-[14px] font-medium text-white">中</C>
        <C className="ml-[4px] w-[28px]"><SogouS w={15} /></C>
        <div className="ml-[15px] w-[92px] whitespace-nowrap pt-[2px] text-center text-[12px] leading-[19px]">
          <div>上午 8:44:20</div>
          <div>2018/3/1 星期四</div>
        </div>
        <div className="ml-[10px] mr-[4px] h-[40px] w-px bg-[#5b7389]" />
      </div>
    </div>
  );
}

function NetMonitor() {
  return (
    <div className="absolute left-[1353px] top-[8px] h-[60px] w-[290px]">
      <div className="absolute left-[24px] top-[5px] h-[40px] w-[103px] rounded-r-full border border-[#aaa] bg-gradient-to-b from-[#f6f6f6] to-[#d2d2d2] shadow" />
      <div className="absolute left-0 top-0 flex h-[48px] w-[48px] items-center justify-center overflow-hidden rounded-full border-[2px] border-[#e5efe8] bg-gradient-to-b from-[#1c7a55] from-35% to-[#3fc956] to-35% text-[14px] text-white shadow-[0_1px_4px_#444]">65%</div>
      <div className="absolute left-[51px] top-[12px]">
        <Svg w={8} h={24}>
          <path d="M4 0l3.500 4H5v4H3V4H.5z" fill="#ee4257" /><path d="M4 24l3.500-4H5v-4H3v4H.5z" fill="#1e9b6a" />
        </Svg>
      </div>
      <div className="absolute left-[79px] top-[10px] font-['Noto_Sans'] text-[10px] leading-[15px] tracking-[-0.4px] text-black">
        <div>0K/s</div>
        <div>0K/s</div>
      </div>
      <div className="absolute left-[103px] top-[17px] flex h-[16px] w-[16px] items-center justify-center rounded-full bg-[#2e74d6]">
        <Svg w={8} h={8}><path d="M4 0v8M0 4h8" stroke="#fff" strokeWidth="1.500" /></Svg>
      </div>
      <div className="absolute left-[93px] top-[35px] flex h-[22px] w-[194px] items-center border border-[#d0d6de] bg-white pl-[16px]">
        <C className="w-[22px] text-[14px] font-bold text-[#1f72c0]">中</C>
        <C className="w-[21px]">
          <Svg w={12} h={11}><circle cx="2.500" cy="3" r="1.800" stroke="#1f72c0" /><path d="M9 4c3 0 3 4-.5 6" stroke="#1f72c0" strokeWidth="2.500" /></Svg>
        </C>
        <C className="w-[24px]">
          <Svg w={16} h={16}>
            <circle cx="8" cy="8" r="7" stroke="#1f72c0" strokeWidth="1.500" /><path d="M5.500 5v2.500M10.500 5v2.500M4.500 9.500c1.500 3 5.500 3 7 0" stroke="#1f72c0" strokeWidth="1.400" />
          </Svg>
        </C>
        <C className="w-[21px]">
          <Svg w={13} h={15}>
            <rect x="4" width="5" height="9" rx="2.500" fill="#1f72c0" /><path d="M1 6c0 7 11 7 11 0M6.500 11v4M3.500 14.500h6" stroke="#1f72c0" strokeWidth="1.500" />
          </Svg>
        </C>
        <C className="w-[23px]">
          <Svg w={16} h={12}>
            <rect width="16" height="12" rx="1" fill="#1f72c0" /><path d="M2 3.500h12M2 6h12" stroke="#fff" strokeWidth="1.300" strokeDasharray="1.500 1" /><path d="M4 9h8" stroke="#fff" strokeWidth="1.300" />
          </Svg>
        </C>
        <C className="w-[24px]">
          <Svg w={16} h={14}>
            <circle cx="5" cy="3" r="3" fill="#c2c6cd" /><path d="M0 14V9c0-3 10-3 10 0v5z" fill="#c2c6cd" /><rect x="6.500" y="7.500" width="9" height="6" fill="#fff" stroke="#b3b7be" /><path d="M9.500 8v5M12.500 8v5" stroke="#b3b7be" />
          </Svg>
        </C>
        <C className="w-[17px]">
          <Svg w={14} h={13}><path d="M4 0c1 2 5 2 6 0l4 3-1.500 3L11 5.500V13H3V5.500L1.500 6 0 3z" fill="#1f72c0" /></Svg>
        </C>
        <C className="w-[25px]">
          <Svg w={14} h={14}>
            <path d="M1 13l6.500-6.500" stroke="#1f72c0" strokeWidth="3" /><path d="M10.500.5C7 .5 5.500 4 7 6.500S13 8 13.500 4L11 5 9 3.500z" fill="#1f72c0" />
          </Svg>
        </C>
      </div>
      <div className="absolute left-[81px] top-[32px]"><SogouS w={26} /></div>
    </div>
  );
}

export default function App() {
  return (
    <div className={`relative flex h-[1080px] w-[1920px] flex-col overflow-hidden ${UI}`}>
      <TitleBar />
      <RibbonTabs />
      <Ribbon />
      <DocTabs />
      <Workspace />
      <StatusBar />
      <Taskbar />
      <NetMonitor />
    </div>
  );
}
